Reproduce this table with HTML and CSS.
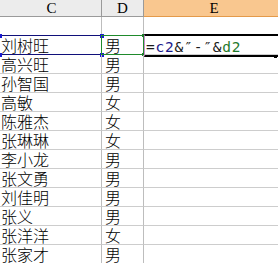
FILE: index.html
```html
<!DOCTYPE html>
<html lang="zh">
<head>
<meta charset="utf-8">
<link rel="stylesheet" href="styles.css">
</head>
<body>
<div class="sheet">
  <div class="hcell colc">C</div>
  <div class="hcell cold">D</div>
  <div class="hcell cole active">E</div>

  <div class="cell colc"></div><div class="cell cold"></div><div class="cell cole"></div>

  <div class="cell colc sel-c">刘树旺<span class="box-c"><i class="h tl"></i><i class="h bl"></i><i class="h tr"></i><i class="h br"></i></span></div>
  <div class="cell cold sel-d">男<span class="box-d"><i class="g tr"></i><i class="g br"></i></span></div>
  <div class="cell cole edit"><span class="box-e"><i class="dot"></i></span><span class="f">=<b class="ref1">c2</b>&amp;″-″&amp;<b class="ref2">d2</b></span></div>

  <div class="cell colc">高兴旺</div><div class="cell cold">男</div><div class="cell cole"></div>
  <div class="cell colc">孙智国</div><div class="cell cold">男</div><div class="cell cole"></div>
  <div class="cell colc">高敏</div><div class="cell cold">女</div><div class="cell cole"></div>
  <div class="cell colc">陈雅杰</div><div class="cell cold">女</div><div class="cell cole"></div>
  <div class="cell colc">张琳琳</div><div class="cell cold">女</div><div class="cell cole"></div>
  <div class="cell colc">李小龙</div><div class="cell cold">男</div><div class="cell cole"></div>
  <div class="cell colc">张文勇</div><div class="cell cold">男</div><div class="cell cole"></div>
  <div class="cell colc">刘佳明</div><div class="cell cold">男</div><div class="cell cole"></div>
  <div class="cell colc">张义</div><div class="cell cold">男</div><div class="cell cole"></div>
  <div class="cell colc">张洋洋</div><div class="cell cold">女</div><div class="cell cole"></div>
  <div class="cell colc">张家才</div><div class="cell cold">男</div><div class="cell cole"></div>
</div>
</body>
</html>
```
FILE: styles.css
```css
html, body {
  margin: 0;
  padding: 0;
  background: #ffffff;
  overflow: hidden;
}
.sheet {
  display: grid;
  grid-template-columns: 102px 42px 140px;
  grid-auto-rows: 19px;
  grid-template-rows: 17px;
  width: 284px;
}
.hcell {
  box-sizing: border-box;
  height: 17px;
  background: #ececec;
  border-right: 1px solid #9a9a9a;
  border-bottom: 1px solid #9a9a9a;
  font-family: "Liberation Serif", serif;
  font-size: 15px;
  line-height: 16px;
  color: #000;
  text-align: center;
}
.hcell.active {
  background: #f9c78f;
  border-bottom: 1px solid #e49a4a;
  border-right: none;
}
.hcell.colc { text-indent: 2px; }
.cell {
  box-sizing: border-box;
  height: 19px;
  border-right: 1px solid #bdbdbd;
  border-bottom: 1px solid #cdcdcd;
  font-family: "Noto Sans CJK SC", "Noto Sans", sans-serif;
  font-size: 16px;
  font-weight: 300;
  line-height: 18px;
  color: #000;
  padding-left: 1px;
  white-space: nowrap;
  position: relative;
}
.cell.cold { padding-left: 3px; }
.cell.cole { border-right: none; }

/* selection overlays */
.box-c {
  position: absolute;
  left: 0;
  top: -1px;
  right: -1px;
  bottom: -1px;
  border: 1px solid #10107a;
  border-left: none;
}
.h {
  position: absolute;
  width: 4px;
  height: 4px;
  background: #1a1ad0;
}
.h.tl { left: -2px; top: -2px; }
.h.bl { left: -2px; bottom: -3px; }
.h.tr { right: -3px; top: -2px; }
.h.br { right: -3px; bottom: -3px; }

.box-d {
  position: absolute;
  left: -1px;
  top: -1px;
  right: -1px;
  bottom: -1px;
  border: 1px solid #1f8a2c;
}
.g {
  position: absolute;
  width: 3px;
  height: 3px;
  background: #1f7a2c;
}
.g.tr { right: -2px; top: -2px; }
.g.br { right: -2px; bottom: -2px; }

.box-e {
  position: absolute;
  left: 0;
  top: -2px;
  right: 0;
  bottom: -3px;
  border-top: 2px solid #000;
  border-bottom: 2px solid #000;
  border-left: 1px solid #c98cc9;
}
.dot {
  position: absolute;
  right: 7px;
  bottom: -3px;
  width: 3px;
  height: 3px;
  background: #000;
}
.f {
  position: relative;
  font-family: "DejaVu Sans Mono", monospace;
  font-size: 14.5px;
  font-weight: normal;
  letter-spacing: 0.8px;
  color: #1a1a1a;
  padding-left: 1px;
}
.ref1 { font-weight: normal; color: #1a1a8c; }
.ref2 { font-weight: normal; color: #1f7a2c; }
```
